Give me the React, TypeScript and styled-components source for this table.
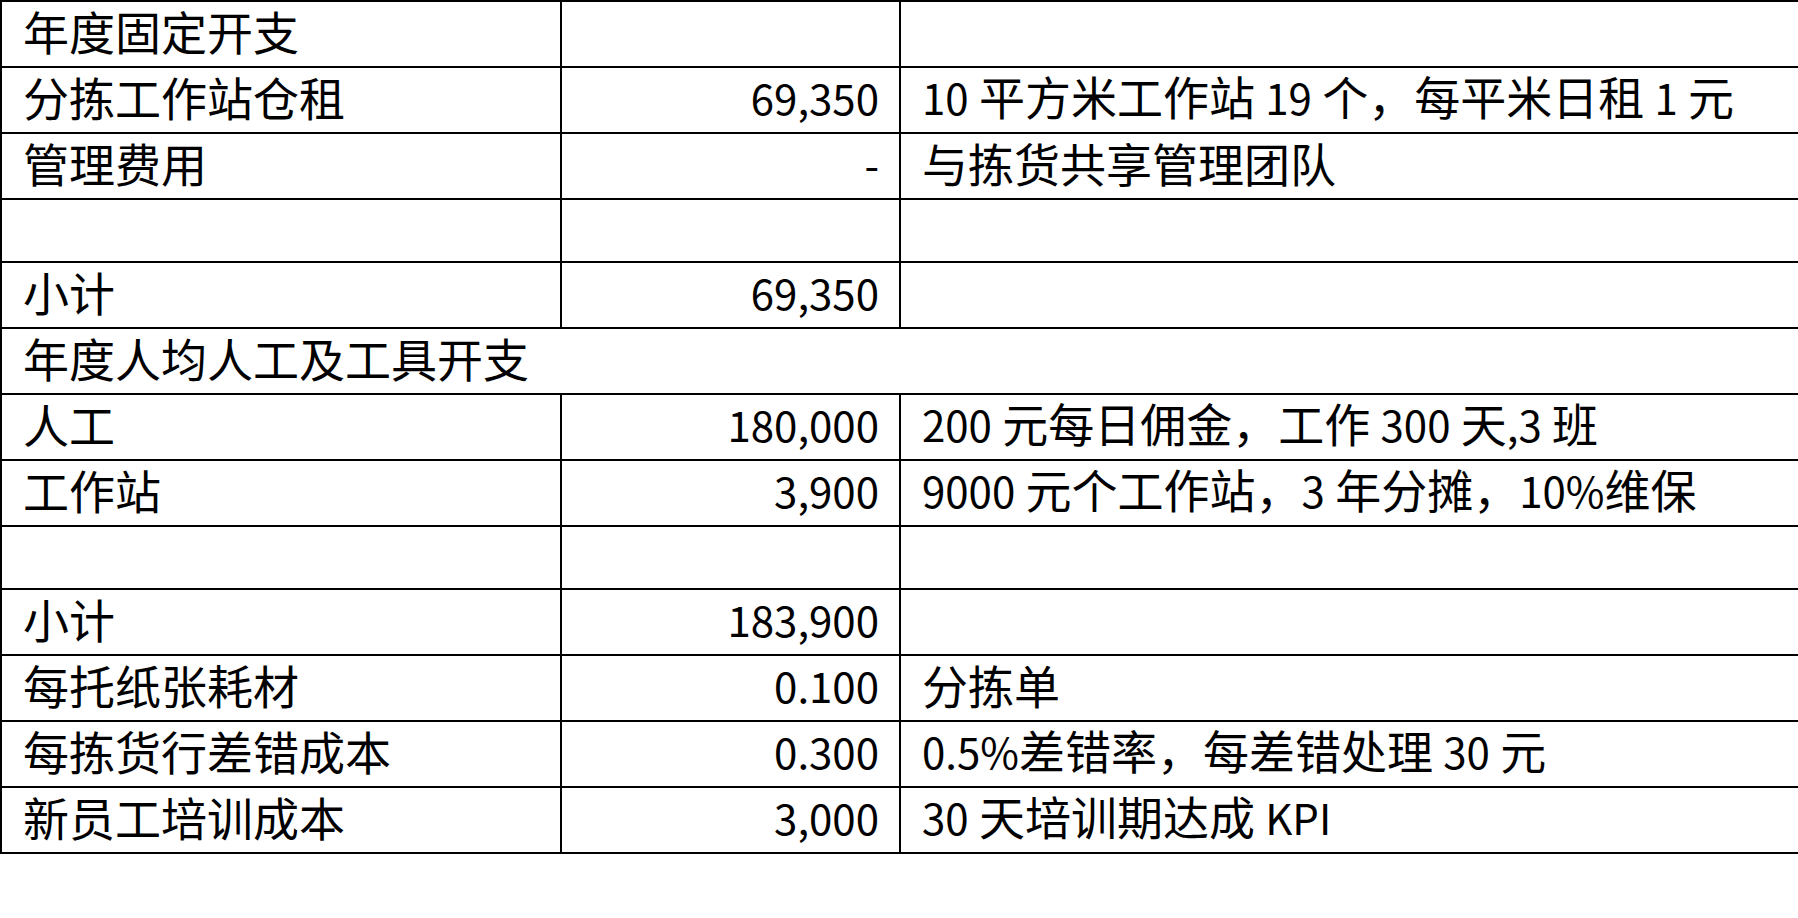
import styled, { createGlobalStyle } from "styled-components";

const GlobalStyle = createGlobalStyle`
  html, body {
    margin: 0;
    padding: 0;
    background: #fff;
  }
  body {
    font-family: "Noto Sans CJK SC", "Noto Sans", sans-serif;
    color: #000;
  }
`;

const Sheet = styled.div`
  display: grid;
  grid-template-columns: 560px 339px 1fr;
  border-top: 2px solid #000;
  border-left: 2px solid #000;
`;

interface CellProps {
  $right?: boolean;
  $short?: boolean;
  $span?: boolean;
  $last?: boolean;
}

const Cell = styled.div<CellProps>`
  box-sizing: border-box;
  height: ${(p) => (p.$short ? 63 : 66)}px;
  display: flex;
  align-items: center;
  justify-content: ${(p) => (p.$right ? "flex-end" : "flex-start")};
  padding: 0 20px 8px 21px;
  border-bottom: 2px solid #000;
  border-right: ${(p) => (p.$last ? "none" : "2px solid #000")};
  grid-column: ${(p) => (p.$span ? "1 / -1" : "auto")};
  font-size: 46px;
  line-height: 46px;
  white-space: nowrap;
`;

const Text = styled.span`
  white-space: pre;
`;

// latin runs (digits, KPI, punctuation) are a touch narrower in the sheet
const Latin = styled.span`
  font-size: 42px;
`;

const mixed = (text?: string) => {
  if (!text) return null;
  return (
    <Text>
      {text.split(/([0-9A-Za-z.,%\-]+)/).map((part, i) =>
        i % 2 === 1 ? <Latin key={i}>{part}</Latin> : part
      )}
    </Text>
  );
};

type Row =
  | { kind: "line"; label: string; value?: string; note?: string }
  | { kind: "section"; label: string }
  | { kind: "blank" };

const rows: Row[] = [
  { kind: "line", label: "年度固定开支" },
  { kind: "line", label: "分拣工作站仓租", value: "69,350", note: "10 平方米工作站 19 个，每平米日租 1 元" },
  { kind: "line", label: "管理费用", value: "-", note: "与拣货共享管理团队" },
  { kind: "blank" },
  { kind: "line", label: "小计", value: "69,350" },
  { kind: "section", label: "年度人均人工及工具开支" },
  { kind: "line", label: "人工", value: "180,000", note: "200 元每日佣金，工作 300 天,3 班" },
  { kind: "line", label: "工作站", value: "3,900", note: "9000 元个工作站，3 年分摊，10%维保" },
  { kind: "blank" },
  { kind: "line", label: "小计", value: "183,900" },
  { kind: "line", label: "每托纸张耗材", value: "0.100", note: "分拣单" },
  { kind: "line", label: "每拣货行差错成本", value: "0.300", note: "0.5%差错率，每差错处理 30 元" },
  { kind: "line", label: "新员工培训成本", value: "3,000", note: "30 天培训期达成 KPI" },
];

const App = () => {
  return (
    <>
      <GlobalStyle />
      <Sheet>
        {rows.map((row, i) => {
          if (row.kind === "section") {
            return (
              <Cell key={i} $span $last>
                {row.label}
              </Cell>
            );
          }
          if (row.kind === "blank") {
            return [
              <Cell key={`${i}-a`} $short />,
              <Cell key={`${i}-b`} $short />,
              <Cell key={`${i}-c`} $short $last />,
            ];
          }
          return [
            <Cell key={`${i}-a`}>{row.label}</Cell>,
            <Cell key={`${i}-b`} $right>
              {mixed(row.value)}
            </Cell>,
            <Cell key={`${i}-c`} $last>
              {mixed(row.note)}
            </Cell>,
          ];
        })}
      </Sheet>
    </>
  );
};

export default App;
